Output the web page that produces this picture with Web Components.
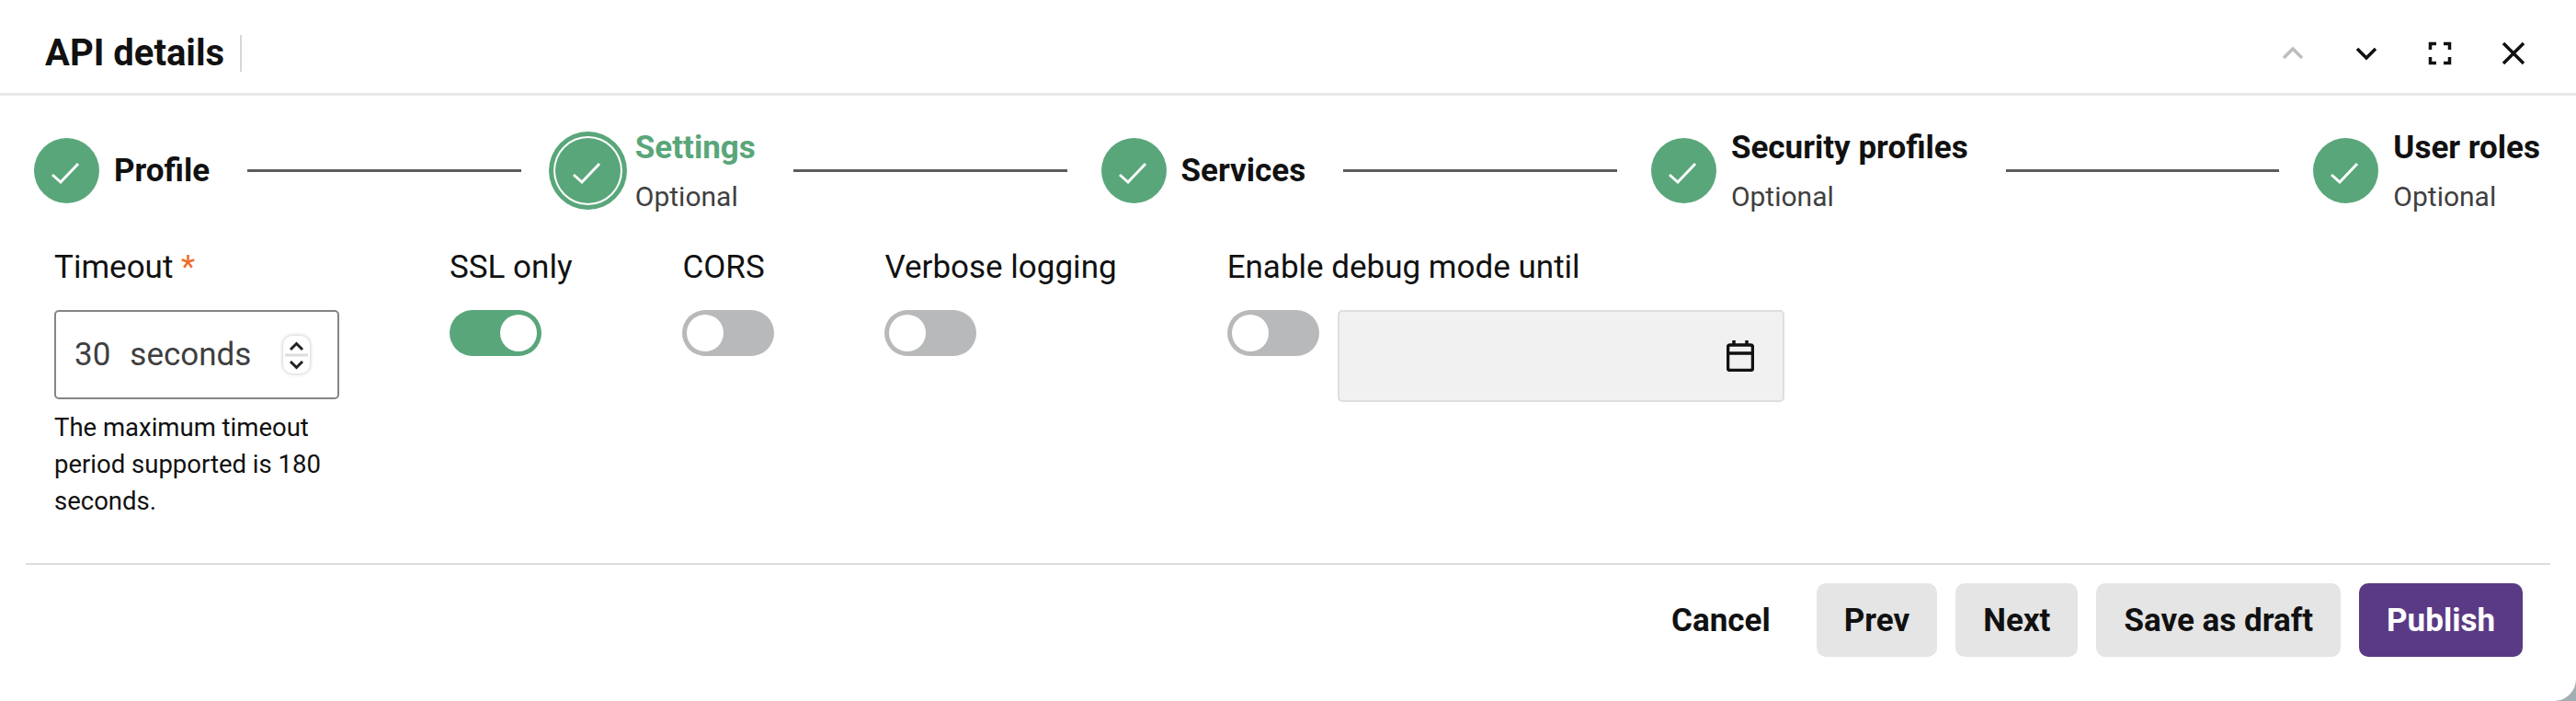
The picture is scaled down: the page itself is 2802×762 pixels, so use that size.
<!DOCTYPE html>
<html>
<head>
<meta charset="utf-8">
<title>API details</title>
<style>
  html, body { margin: 0; padding: 0; }
  body { width: 2802px; height: 762px; overflow: hidden; background: #a3aeb4; font-family: Roboto, sans-serif; color: #111; }
</style>
</head>
<body>
<template id="step-tpl">
  <style>
    :host { display: flex; align-items: center; flex: none; height: 85px; }
    .dot { width: 71px; height: 71px; border-radius: 50%; background: #59a67a; flex: none; }
    :host([active]) .dot { box-shadow: 0 0 0 2px #fff, 0 0 0 7px #59a67a; }
    .text { margin-left: 16px; display: flex; flex-direction: column; }
    .name { font-size: 35px; font-weight: 700; line-height: 42px; white-space: nowrap; color: #111; }
    :host([active]) .name { color: #59a67a; }
    .sub { font-size: 30px; line-height: 36px; margin-top: 14px; color: #3f3f3f; display: none; }
    :host([optional]) .sub { display: block; }
    svg { width: 71px; height: 71px; display: block; }
  </style>
  <div class="dot"><svg viewBox="0 0 71 71" fill="none" stroke="#fff" stroke-width="3"><path d="M20 40L29 48L48 28"/></svg></div>
  <div class="text"><div class="name"><slot></slot></div><div class="sub">Optional</div></div>
</template>

<template id="toggle-tpl">
  <style>
    :host { display: inline-block; width: 100px; height: 50px; flex: none; }
    .track { width: 100px; height: 50px; border-radius: 25px; background: #b8b9ba; box-sizing: border-box; padding: 5px; display: flex; }
    .knob { width: 40px; height: 40px; border-radius: 50%; background: #fff; }
    :host([on]) .track { background: #59a67a; justify-content: flex-end; }
  </style>
  <div class="track"><div class="knob"></div></div>
</template>

<template id="dialog-tpl">
  <style>
    :host { display: flex; flex-direction: column; width: 2802px; height: 762px; background: #fff; border-radius: 0 0 24px 0; box-sizing: border-box; }
    header { height: 104px; box-sizing: border-box; border-bottom: 3px solid #e8e8e8; display: flex; align-items: center; padding: 14px 0 0 49px; flex: none; }
    h1 { margin: 0; font-size: 40px; font-weight: 700; line-height: 44px; color: #111; }
    .sep { width: 2px; height: 40px; background: #d6d6d6; margin-left: 17px; }
    .tools { margin-left: auto; display: flex; gap: 40px; padding-right: 48px; }
    .tools svg { width: 40px; height: 40px; display: block; fill: none; stroke: #111; stroke-width: 3.5; }
    .tools svg.off { stroke: #bdbdbd; }
    .steps { display: flex; align-items: center; padding: 0 39px 0 37px; margin-top: 39px; flex: none; }
    .line { flex: 1; height: 3px; background: #5c5c5c; margin: 0 37px 0 41px; }
    form { display: flex; padding: 0 0 0 59px; margin-top: 42px; flex: none; }
    .field { display: flex; flex-direction: column; flex: none; margin-right: 120px; }
    .field:last-child { margin-right: 0; }
    label { font-size: 35px; line-height: 42px; color: #111; white-space: nowrap; margin-bottom: 25px; }
    label i { font-style: normal; color: #f26b2a; }
    .num { width: 310px; height: 97px; box-sizing: border-box; border: 2px solid #858585; border-radius: 5px; display: flex; align-items: center; padding: 0 10px 0 20px; font-size: 35px; color: #3f3f3f; }
    .num .unit { margin-left: 21px; }
    .spin { margin-left: auto; margin-right: 20px; width: 29px; height: 41px; border-radius: 10px; box-shadow: 0 0 4px #bbb; }
    .spin svg { display: block; width: 29px; height: 41px; fill: none; stroke: #222; stroke-width: 3; }
    .hint { width: 310px; font-size: 27.5px; line-height: 40px; color: #111; margin-top: 11px; }
    .row { display: flex; gap: 20px; }
    .date { width: 486px; height: 100px; box-sizing: border-box; background: #f1f1f1; border: 2px solid #dedede; border-radius: 5px; display: flex; align-items: center; justify-content: flex-end; padding-right: 31px; }
    .date svg { width: 30px; height: 34px; fill: none; stroke: #111; stroke-width: 3.5; display: block; }
    hr { border: 0; height: 2px; background: #dcdcdc; margin: 47px 28px 0; flex: none; }
    footer { display: flex; justify-content: flex-end; align-items: center; gap: 20px; padding: 20px 58px 0 0; }
    button { font: 700 35px Roboto, sans-serif; height: 80px; border: 0; border-radius: 10px; background: #e5e5e5; color: #111; padding: 0 30px; }
    button.plain { background: transparent; }
    button.primary { background: #5a3a84; color: #fff; }
  </style>
  <header>
    <h1>API details</h1><div class="sep"></div>
    <div class="tools">
      <svg class="off" viewBox="0 0 40 40"><path d="M10 25L20 15L30 25"/></svg>
      <svg viewBox="0 0 40 40"><path d="M10 15L20 25L30 15"/></svg>
      <svg viewBox="0 0 40 40"><path d="M9.5 16V9.5H16M24 9.5H30.5V16M9.5 24V30.5H16M30.5 24V30.5H24"/></svg>
      <svg viewBox="0 0 40 40"><path d="M9 9L31 31M31 9L9 31"/></svg>
    </div>
  </header>
  <div class="steps">
    <api-step>Profile</api-step><div class="line"></div>
    <api-step active optional>Settings</api-step><div class="line"></div>
    <api-step>Services</api-step><div class="line"></div>
    <api-step optional>Security profiles</api-step><div class="line"></div>
    <api-step optional>User roles</api-step>
  </div>
  <form>
    <div class="field">
      <label>Timeout <i>*</i></label>
      <div class="num"><span>30</span><span class="unit">seconds</span>
        <div class="spin"><svg viewBox="0 0 29 41"><path d="M2 21H27" stroke="#ddd"/><path d="M8 15L14.5 8.500L21 15M8 28L14.5 34.500L21 28"/></svg></div>
      </div>
      <div class="hint">The maximum timeout period supported is 180 seconds.</div>
    </div>
    <div class="field"><label>SSL only</label><api-toggle on></api-toggle></div>
    <div class="field"><label>CORS</label><api-toggle></api-toggle></div>
    <div class="field"><label>Verbose logging</label><api-toggle></api-toggle></div>
    <div class="field"><label>Enable debug mode until</label>
      <div class="row"><api-toggle></api-toggle>
        <div class="date"><svg viewBox="0 0 30 34"><path d="M4 5H26Q28.500 5 28.500 7.500V30Q28.500 32.500 26 32.500H4Q1.500 32.500 1.500 30V7.500Q1.500 5 4 5ZM1.500 14H28.500M8 0V5M22 0V5"/></svg></div>
      </div>
    </div>
  </form>
  <hr>
  <footer>
    <button class="plain">Cancel</button><button>Prev</button><button>Next</button><button>Save as draft</button><button class="primary">Publish</button>
  </footer>
</template>

<api-dialog></api-dialog>

<script>
  function tpl(id) { return document.getElementById(id).content.cloneNode(true); }
  class ApiStep extends HTMLElement {
    constructor() { super(); this.attachShadow({mode: 'open'}).appendChild(tpl('step-tpl')); }
  }
  class ApiToggle extends HTMLElement {
    constructor() { super(); this.attachShadow({mode: 'open'}).appendChild(tpl('toggle-tpl')); }
  }
  class ApiDialog extends HTMLElement {
    constructor() { super(); this.attachShadow({mode: 'open'}).appendChild(tpl('dialog-tpl')); }
  }
  customElements.define('api-step', ApiStep);
  customElements.define('api-toggle', ApiToggle);
  customElements.define('api-dialog', ApiDialog);
</script>
</body>
</html>
